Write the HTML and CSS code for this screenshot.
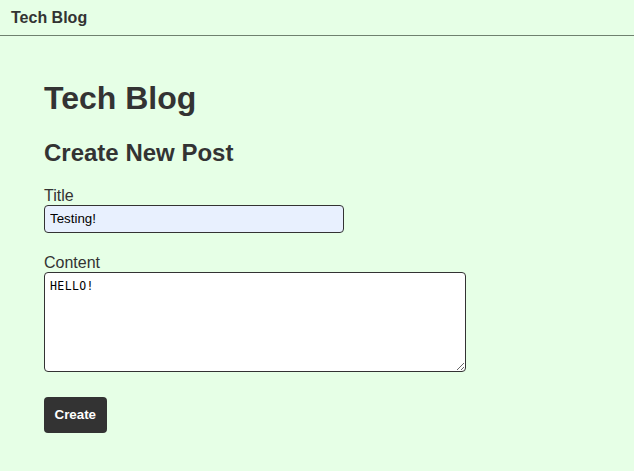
FILE: index.html
```html
<!DOCTYPE html>
<html>
<head>
<meta charset="utf-8">
<link rel="stylesheet" href="styles.css">
</head>
<body>
<header class="topbar"><span class="brand">Tech Blog</span></header>
<main class="page">
  <h1 class="title">Tech Blog</h1>
  <h2 class="subtitle">Create New Post</h2>
  <form class="post-form">
    <div class="field">
      <label class="label" for="t">Title</label>
      <input class="input" id="t" type="text" value="Testing!">
    </div>
    <div class="field">
      <label class="label" for="c">Content</label>
      <textarea class="textarea" id="c">HELLO!</textarea>
    </div>
    <button class="btn" type="button">Create</button>
  </form>
</main>
</body>
</html>
```
FILE: styles.css
```css
html, body {
  margin: 0;
  background: #e6ffe6;
  color: #333;
  font-family: "Liberation Sans", Arial, sans-serif;
}
.topbar {
  height: 35px;
  border-bottom: 1px solid #6f816f;
  display: flex;
  align-items: center;
  padding: 0 11px;
}
.brand {
  font-weight: bold;
  font-size: 16px;
}
.page {
  padding: 23px 44px 20px;
}
.title {
  font-size: 32px;
  margin: 21.44px 0;
}
.subtitle {
  font-size: 24px;
  margin: 19.92px 0;
}
.field {
  margin-bottom: 21px;
}
.label {
  display: block;
  font-size: 16px;
}
.input {
  box-sizing: border-box;
  width: 300px;
  height: 28px;
  border: 1px solid #333;
  border-radius: 4px;
  background: #e8f0fe;
  padding: 0 5px;
  font-family: "Liberation Sans", Arial, sans-serif;
  font-size: 13.33px;
  color: #000;
  display: block;
  margin: 0;
}
.textarea {
  box-sizing: border-box;
  display: block;
  width: 422px;
  height: 100px;
  border: 1px solid #333;
  border-radius: 4px;
  background: #fff;
  padding: 6px 5px;
  font-family: "DejaVu Sans Mono", monospace;
  font-size: 11.5px;
  letter-spacing: 0.4px;
  color: #000;
  margin: 0;
}
.btn {
  margin-top: 4px;
  height: 36px;
  padding: 0 10.5px;
  border: none;
  border-radius: 4px;
  background: #333;
  color: #fff;
  font-family: "Liberation Sans", Arial, sans-serif;
  font-weight: bold;
  font-size: 13.33px;
}
```
